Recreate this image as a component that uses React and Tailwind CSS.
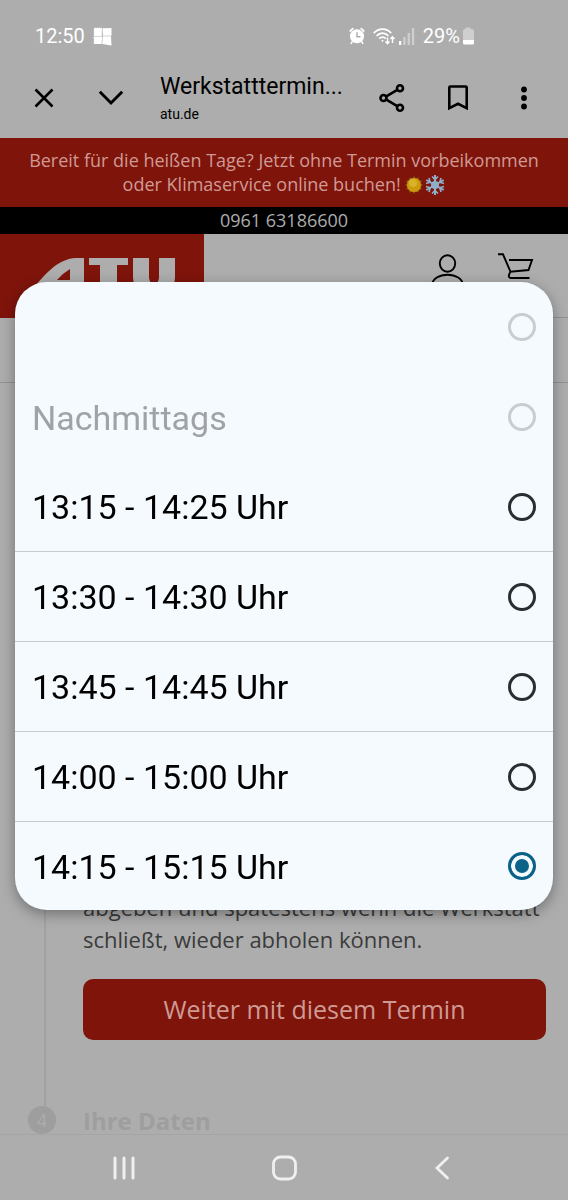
import React, { useState } from 'react';

const slots = [
  { id: 'empty', label: '', disabled: true },
  { id: 'nachmittags', label: 'Nachmittags', disabled: true },
  { id: '1315', label: '13:15 - 14:25 Uhr' },
  { id: '1330', label: '13:30 - 14:30 Uhr' },
  { id: '1345', label: '13:45 - 14:45 Uhr' },
  { id: '1400', label: '14:00 - 15:00 Uhr' },
  { id: '1415', label: '14:15 - 15:15 Uhr' },
];

function StatusBar() {
  return (
    <div className="flex h-18 items-center justify-between pl-[35px] pr-[93px] text-xl text-white">
      <div className="flex items-center gap-2">
        <span>12:50</span>
        <svg width="19" height="19" viewBox="0 0 19 19" fill="#fff">
          <path d="M.5 .5l1 .8 1-.8 1 .8 1-.8 1 .8 1-.8 1 .8 1.300-.8V9H.5l.8-1-.8-1 .8-1-.8-1 .8-1-.8-1 .8-1z" />
          <path d="M9.400 1.200L18.500 1v7.700H9.900z" />
          <path d="M.5 9.600h8.600L8.600 17H.5l.8-1-.8-1 .8-1-.8-1 .8-1-.8-1z" />
          <path d="M9.700 9.300h8.300l.5 9.200-9.300-1.500z" />
        </svg>
      </div>
      <div className="flex items-center">
        <svg width="16" height="18" viewBox="0 0 16 18" fill="#fff">
          <path d="M1 5.500L.4 3.500 3.500.8l1.600.8zM15 5.500l.6-2L12.500.8l-1.600.8z" />
          <path d="M3.500 14L2 17M12.500 14l1.500 3" stroke="#fff" strokeWidth="1.600" />
          <circle cx="8" cy="9.300" r="7" />
          <path d="M8 5.300v4.500h3.500" stroke="#adadad" strokeWidth="1.400" fill="none" />
        </svg>
        <svg className="ml-2" width="22" height="18" viewBox="0 0 22 18" fill="none" stroke="#fff" strokeWidth="1.800">
          <path d="M.8 6.200C5.500 .8 13.500 .8 18.200 6.200M3.600 9c3.400-3.800 8.400-3.800 11.800 0M6.300 11.700c1.800-2 4.600-2 6.400 0" />
          <circle cx="9.500" cy="13.800" r="1" fill="#fff" stroke="none" />
          <path d="M14.500 10.500v6M12.500 14.500l2 2.200 2-2.200M19.500 16v-6M17.500 12l2-2.200 2 2.200" strokeWidth="1.400" />
        </svg>
        <svg className="ml-1" width="16" height="17" viewBox="0 0 16 17">
          <rect x="0" y="13" width="2.300" height="4" fill="#fff" />
          <rect x="4.300" y="9" width="2.300" height="8" fill="#cfcfcf" />
          <rect x="8.600" y="5" width="2.300" height="12" fill="#cfcfcf" />
          <rect x="12.900" y="0" width="2.300" height="17" fill="#cfcfcf" />
        </svg>
        <span className="ml-2">29%</span>
        <svg className="ml-[2px]" width="13" height="18" viewBox="0 0 13 18">
          <path d="M3.500 2V.5h5V2h1.500q2 .5 2 2v9H1V4q0-1.500 2-2z" fill="#cfcfcf" />
          <path d="M1 13h11v3q0 1.500-1.500 1.500h-8Q1 17.500 1 16z" fill="#fff" />
        </svg>
      </div>
    </div>
  );
}

function BrowserBar() {
  return (
    <div className="flex h-[66px] items-start justify-between pl-[34px] pr-10 text-black">
      <div className="flex min-w-0 items-start">
        <button aria-label="Schließen" className="mt-4">
          <svg width="20" height="20" viewBox="0 0 20 20" fill="none" stroke="#000" strokeWidth="2.600">
            <path d="M1.500 1.500l17 17M18.500 1.500l-17 17" />
          </svg>
        </button>
        <button aria-label="Minimieren" className="ml-11 mt-4">
          <svg width="26" height="20" viewBox="0 0 26 20" fill="none" stroke="#000" strokeWidth="2.900">
            <path d="M1.800 3.800L13 15 24.200 3.800" />
          </svg>
        </button>
        <div className="ml-9 min-w-0">
          <p className="truncate text-[23px] leading-[30px]">Werkstatttermin...</p>
          <p className="text-sm leading-6">atu.de</p>
        </div>
      </div>
      <div className="flex shrink-0 gap-10 pt-[11px]">
        <button aria-label="Teilen">
          <svg width="28" height="30" viewBox="0 0 28 30" fill="none" stroke="#000" strokeWidth="2.600">
            <circle cx="5.500" cy="15" r="3" />
            <circle cx="22" cy="5.200" r="3" />
            <circle cx="22" cy="24.800" r="3" />
            <path d="M8.300 13.400l11-6.500M8.300 16.600l11 6.500" />
          </svg>
        </button>
        <button aria-label="Lesezeichen">
          <svg width="24" height="30" viewBox="0 0 24 30" fill="none" stroke="#000" strokeWidth="2.600">
            <path d="M3.300 4.500q0-1 1-1h15.400q1 0 1 1v20.600L12 20.800l-8.700 4.300z" />
          </svg>
        </button>
        <button aria-label="Mehr" className="ml-2.5">
          <svg width="8" height="30" viewBox="0 0 8 30">
            <circle cx="4" cy="6.500" r="2.900" />
            <circle cx="4" cy="15" r="2.900" />
            <circle cx="4" cy="23.500" r="2.900" />
          </svg>
        </button>
      </div>
    </div>
  );
}

function Sun() {
  return (
    <svg className="mr-[2px] inline-block align-[-3px]" width="18" height="18" viewBox="0 0 18 18">
      <path
        d="M9 0l1.500 2.500L13.500 1.500l.3 2.800 3 .5-1.200 2.700L18 9l-2.400 1.500 1.200 2.700-3 .5-.3 2.800-3-1L9 18l-1.500-2.500-3 1-.3-2.800-3-.5 1.200-2.700L0 9l2.400-1.500L1.200 4.800l3-.5.3-2.800 3 1z"
        fill="#8f5c10"
      />
      <circle cx="9" cy="9" r="7" fill="#cf9a0e" />
      <circle cx="8" cy="7" r="4" fill="#d8b32a" />
    </svg>
  );
}

function Snowflake() {
  return (
    <svg className="inline-block align-[-4px]" width="20" height="20" viewBox="0 0 20 20" fill="none" stroke="#8fb0ca" strokeWidth="2">
      <path d="M10 0v20M1.300 5l17.400 10M1.300 15l17.400-10" />
      <path d="M7 1.500l3 3 3-3M7 18.500l3-3 3 3M1 8.500l4.200-1.200L4 3M16 3l-1.200 4.300L19 8.500M1 11.500l4.200 1.200L4 17M16 17l-1.200-4.300 4.200-1.200" strokeWidth="1.600" />
      <circle cx="10" cy="10" r="3" />
    </svg>
  );
}

function ShopHeader() {
  return (
    <header>
      <div className="bg-[#7f140b] px-5 pb-[11px] pt-[10px] text-center text-lg leading-6 text-[#cf9a94]">
        Bereit für die heißen Tage? Jetzt ohne Termin vorbeikommen oder Klimaservice online buchen! <Sun />
        <Snowflake />
      </div>
      <div className="bg-black text-center text-lg leading-[27px] text-[#adadad]">
        <a href="tel:096163186600">0961 63186600</a>
      </div>
      <div className="flex h-[84px] justify-between border-b border-[#929292]">
        <a href="#" aria-label="ATU" className="h-[84px] w-[204px] bg-[#7f140b]">
          <svg width="204" height="84" viewBox="0 0 204 84">
            <path
              fill="#adadad"
              fillRule="evenodd"
              d="M84 24v36H70V52H50L44 60H28C44 42 56 25 76 24zM70 35Q63 39 57 46h13z"
            />
            <path fill="#adadad" d="M89 24h39v7H117v29H100V31H89z" />
            <path fill="#adadad" d="M133 24h16v20q1 6 5 6t5-6V24h16v20q-1 16-21 16t-21-16z" />
          </svg>
        </a>
        <div className="flex gap-8 pr-[34px] pt-[18px]">
          <button aria-label="Konto" className="self-start">
            <svg width="34" height="36" viewBox="0 0 34 36" fill="none" stroke="#000" strokeWidth="1.900">
              <ellipse cx="16.500" cy="11.500" rx="7.700" ry="8.200" />
              <path d="M1 34c0-15 31-15 31 0" />
            </svg>
          </button>
          <button aria-label="Warenkorb" className="self-start">
            <svg width="37" height="36" viewBox="0 0 37 36" fill="none" stroke="#000" strokeWidth="1.900">
              <path d="M1 2.300h5l7.500 17.500L31.500 18l3.500-10H12M13.500 19.800q-3.500 5.500 0 6.200h19" />
            </svg>
          </button>
        </div>
      </div>
      <div className="h-[65px] border-b border-[#929292]"></div>
    </header>
  );
}

function BookingSteps() {
  return (
    <main className="flex flex-1 px-[22px]">
      <div className="flex w-[46px] flex-col">
        <div className="ml-[22px] flex-1 border-l-2 border-[#a1a1a1]"></div>
        <div className="ml-[6px] flex h-7 w-7 items-center justify-center rounded-full bg-[#9e9e9e] text-lg text-[#adadad]">
          4
        </div>
      </div>
      <div className="ml-[15px] flex flex-1 flex-col justify-end">
        <p className="text-[22px] leading-8 text-[#3b3b3b]">
          abgeben und spätestens wenn die Werkstatt schließt, wieder abholen können.
        </p>
        <button className="mt-6 h-[61px] w-full rounded-[10px] bg-[#7f140b] text-[25px] text-[#cf9a94]">
          Weiter mit diesem Termin
        </button>
        <h2 className="mt-[68px] text-2xl font-bold leading-[26px] text-[#9e9e9e]">Ihre Daten</h2>
      </div>
    </main>
  );
}

function NavBar() {
  return (
    <nav className="flex h-[66px] items-center justify-between border-t border-[#a5a5a5] pl-[111px] pr-[118px]">
      <button aria-label="Letzte Apps">
        <svg width="24" height="26" viewBox="0 0 24 26" stroke="#f0f0f0" strokeWidth="3" strokeLinecap="round">
          <path d="M4 3v20M13 3v20M22 3v20" />
        </svg>
      </button>
      <button aria-label="Startbildschirm">
        <svg width="26" height="26" viewBox="0 0 26 26" fill="none" stroke="#f0f0f0" strokeWidth="2.800">
          <rect x="1.500" y="2" width="22" height="22" rx="7" />
        </svg>
      </button>
      <button aria-label="Zurück">
        <svg width="16" height="26" viewBox="0 0 16 26" fill="none" stroke="#f0f0f0" strokeWidth="2.800" strokeLinecap="round">
          <path d="M13.500 3L3 13l10.500 10" />
        </svg>
      </button>
    </nav>
  );
}

function SlotDialog({ selected, onSelect }) {
  return (
    <div className="fixed inset-0 flex items-center px-[15px] pb-2">
      <div role="dialog" aria-label="Uhrzeit" className="w-full overflow-hidden rounded-[32px] bg-[#f5faff] shadow-[0_4px_14px_rgba(0,0,0,0.35)]">
        {slots.map((slot) => (
          <label
            key={slot.id}
            className={`flex h-[90px] items-center justify-between px-[17px] text-[34px] last:h-[88px] ${
              slot.disabled ? 'text-[#9fa3a6]' : 'border-b border-[#c6cacd] text-black last:border-b-0'
            }`}
          >
            <span className="pt-[2px]">{slot.label}</span>
            <input
              type="radio"
              name="slot"
              aria-label={slot.label || 'Keine Auswahl'}
              disabled={slot.disabled}
              checked={selected === slot.id}
              onChange={() => onSelect(slot.id)}
              className="h-7 w-7 shrink-0 appearance-none rounded-full border-[3px] border-[#2b2e31] checked:border-[#0b6288] checked:bg-[#0b6288] checked:shadow-[inset_0_0_0_4px_#f5faff] disabled:border-[#c9cdd0]"
            />
          </label>
        ))}
      </div>
    </div>
  );
}

function App() {
  const [selected, setSelected] = useState('1415');

  return (
    <div className="flex min-h-screen flex-col bg-[#adadad] font-['Roboto',sans-serif]">
      <StatusBar />
      <BrowserBar />
      <div className="flex flex-1 flex-col font-['Open_Sans','Noto_Sans',sans-serif]">
        <ShopHeader />
        <BookingSteps />
      </div>
      <NavBar />
      <SlotDialog selected={selected} onSelect={setSelected} />
    </div>
  );
}

export default App;
